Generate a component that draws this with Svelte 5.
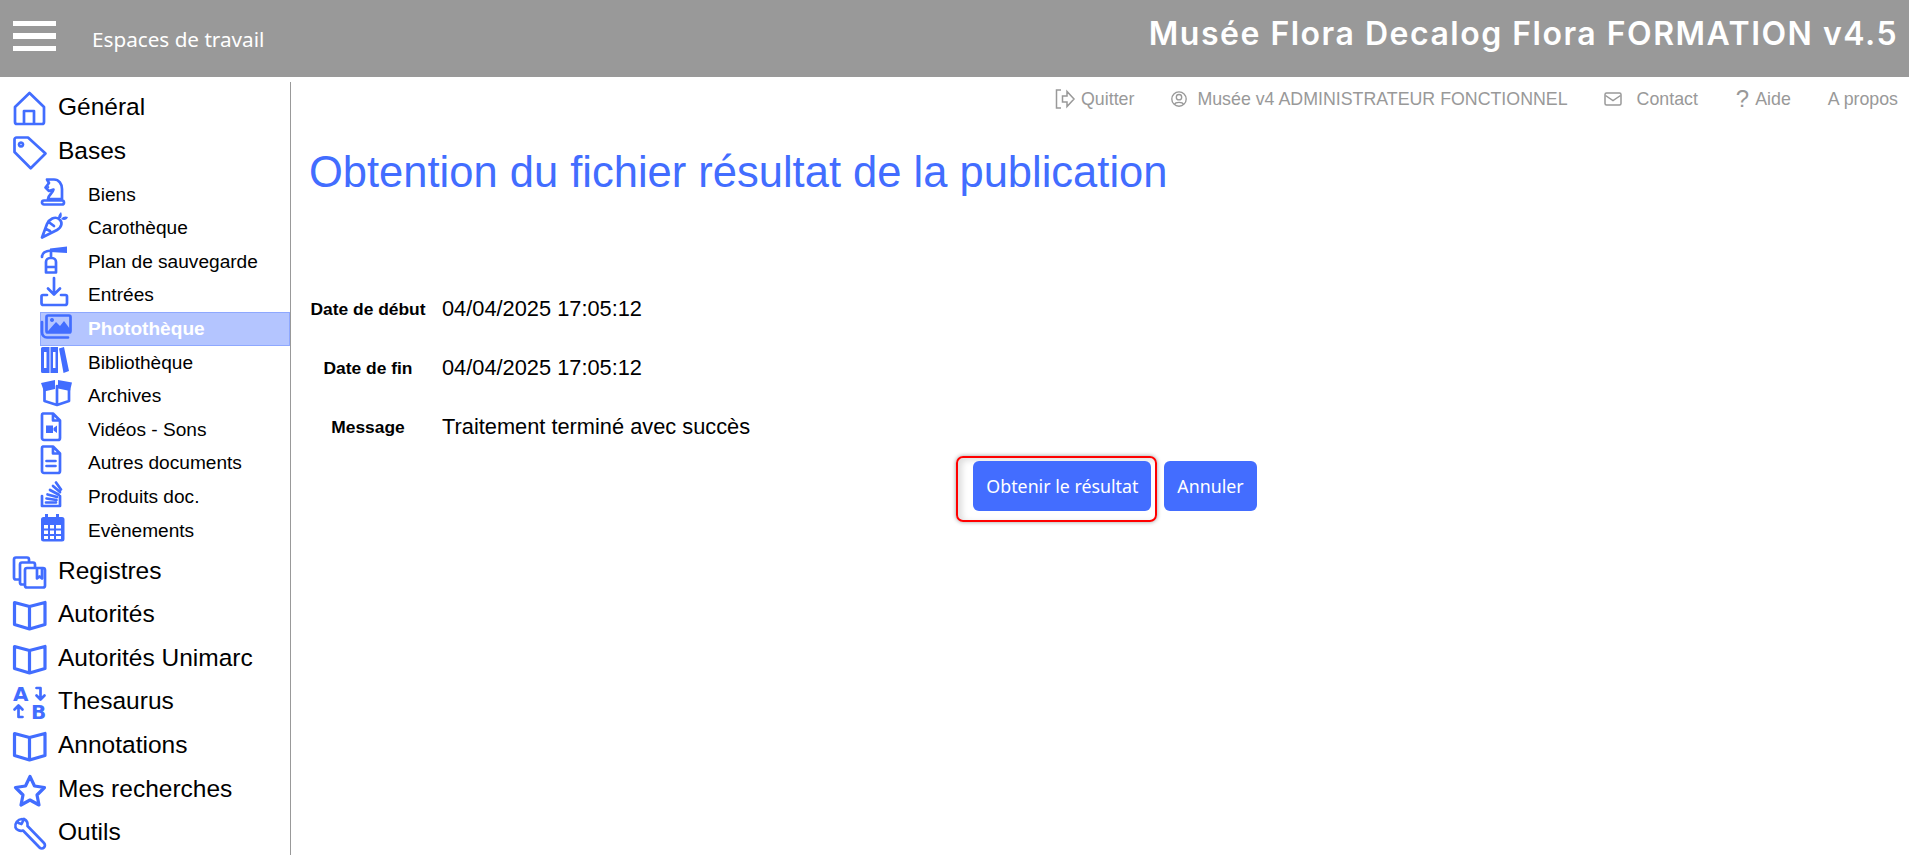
<script>
	// s = stroked outlines, f = filled shapes, all in a 34x34 box
	const icons = {
		home: { s: 'M16.5 1.5L2 15.5V30.5a2 2 0 0 0 2 2H29a2 2 0 0 0 2-2V15.5ZM11 32V19.5H21V32' },
		tag: { s: 'M3.5 2H15L32.5 18L17.7 32.8L1.5 16.5V4a2 2 0 0 1 2-2ZM8 7a2 2 0 1 0 .01 0Z' },
		biens: {
			s: 'M7 4.5H14C19 4.5 22 9 22 14V24H8C8 20 12.5 19 13.5 14.5L9 16L5.5 12.5L9 8ZM4 25.5H22a1.5 1.5 0 0 1 0 4H4a1.5 1.5 0 0 1 0-4Z',
			f: 'M8.2 11a1.1 1.1 0 1 0 .01 0Z'
		},
		carotte: {
			s: 'M2 29.5L7 16C9 11 15 8 19 11C23 14 22 19 17 22ZM6 21L10 23M10 15L14 18',
			f: 'M18 10C18 7 20 5 21 4C22 6 22 8 21 10ZM21 11C23 8 26 8 28 9C27 12 24 13 21 11Z'
		},
		extincteur: {
			s: 'M6 30.5V20a4 4 0 0 1 4-4h2a4 4 0 0 1 4 4V30.5ZM6 25H16M11 16V9M2 15C2 11 5 9 11 8.5',
			f: 'M10 6.5L27 4.5V11L10 10Z'
		},
		entrees: {
			s: 'M14 3V19M8 13.5L14 19.5L20 13.5M7 20H3a1.5 1.5 0 0 0-1.5 1.5V28a2 2 0 0 0 2 2H25a2 2 0 0 0 2-2V21.5A1.5 1.5 0 0 0 25.5 20H21'
		},
		photo: {
			s: 'M2 13V23C2 26 4 28.5 7 28.5H28M8 6.5H29a1.5 1.5 0 0 1 1.5 1.5V22a1.5 1.5 0 0 1-1.5 1.5H8a1.5 1.5 0 0 1-1.5-1.5V8A1.5 1.5 0 0 1 8 6.5Z',
			f: 'M8 22L16 13L20 17L24 12L30 20V23H8ZM12 9a2 2 0 1 0 .01 0Z'
		},
		biblio: {
			f: 'M2.500 4H9.500V30H2.500a1.500 1.500 0 0 1-1.500-1.500V5.500A1.500 1.500 0 0 1 2.500 4ZM10.500 4H18V30H10.500ZM19 5.500L24 4L29 28L23.500 30ZM4 9V25H6.500V9ZM13 9V25H15.500V9Z'
		},
		archives: {
			s: 'M4.500 13V25L17 29L29 25V13M17 10V29',
			f: 'M1 7L15 4V13L4 15.5ZM18 4L32 6.500L30 15L18 12.500Z'
		},
		video: {
			s: 'M3 3.500H13L20 10.500V28a2 2 0 0 1-2 2H4a2 2 0 0 1-2-2V5A1.500 1.500 0 0 1 3 3.500ZM13 4V10.500H20',
			f: 'M6 15.500H13V23H6ZM13.500 18L17 15.500V23L13.500 20.500Z'
		},
		doc: {
			s: 'M3 3.500H13L20 10.500V28a2 2 0 0 1-2 2H4a2 2 0 0 1-2-2V5A1.500 1.500 0 0 1 3 3.500ZM13 4V10.500H20M6.500 18H15.500M6.500 23H15.500'
		},
		produits: {
			s: 'M2 19V29H20V19M6 25.500H16M6.500 21.500L16.500 23M7.500 17.500L17 20M10 13L18.500 17.500M13 9L20 15M16 5.500L21 12.500'
		},
		evenements: {
			f: 'M5 3h3v3h8V3h3v3h3a2.500 2.500 0 0 1 2.500 2.500V28a2.500 2.500 0 0 1-2.500 2.500H3.500A2.500 2.500 0 0 1 1 28V8.500A2.500 2.500 0 0 1 3.500 6H5ZM4 14v3.500h4V14ZM10 14v3.500h4V14ZM16 14v3.500h5V14ZM4 19.500V23h4V19.500ZM10 19.500V23h4V19.500ZM16 19.500V23h5V19.500ZM4 25v3h4V25ZM10 25v3h4V25ZM16 25v3h5V25Z'
		},
		registres: {
			s: 'M6 24H3a2 2 0 0 1-2-2V4a2 2 0 0 1 2-2H14a2 2 0 0 1 2 2V6M11.500 29H9a2 2 0 0 1-2-2V9a2 2 0 0 1 2-2H20a2 2 0 0 1 2 2V12M14 12.500H30a2 2 0 0 1 2 2V30a2 2 0 0 1-2 2H14a2 2 0 0 1-2-2V14.500a2 2 0 0 1 2-2ZM24 13V23L26.500 21L29 23V13'
		},
		livre: { s: 'M1.500 4L16.500 8L32 4V26L16.500 30.500L1.500 26ZM16.500 8V30.500', heavy: true },
		etoile: { s: 'M17 3L21.500 12.500L31.500 14L24 21.500L26 31.500L17 26.500L8 31.500L10 21.500L2.500 14L12.500 12.500Z', heavy: true },
		outils: {
			s: 'M9 2.500A7 7 0 0 0 2.500 11C3.500 13.500 7 15 10 14L26.500 31A3 3 0 0 0 31 26.500L14.500 9.500C15 6.500 14 4 11 2.500L8.500 7.500L5.500 6.500'
		},
		thesaurus: { s: 'M23.500 2.500H27.500V13.500M23.500 10L27.500 14L31.500 10M9.500 31.500H5.500V20.500M1.500 24L5.500 20L9.500 24' }
	};

	const before = [
		{ label: 'Général', icon: 'home' },
		{ label: 'Bases', icon: 'tag' }
	];
	const subs = [
		{ label: 'Biens', icon: 'biens' },
		{ label: 'Carothèque', icon: 'carotte' },
		{ label: 'Plan de sauvegarde', icon: 'extincteur' },
		{ label: 'Entrées', icon: 'entrees' },
		{ label: 'Photothèque', icon: 'photo', active: true },
		{ label: 'Bibliothèque', icon: 'biblio' },
		{ label: 'Archives', icon: 'archives' },
		{ label: 'Vidéos - Sons', icon: 'video' },
		{ label: 'Autres documents', icon: 'doc' },
		{ label: 'Produits doc.', icon: 'produits' },
		{ label: 'Evènements', icon: 'evenements' }
	];
	const after = [
		{ label: 'Registres', icon: 'registres' },
		{ label: 'Autorités', icon: 'livre' },
		{ label: 'Autorités Unimarc', icon: 'livre' },
		{ label: 'Thesaurus', icon: 'thesaurus' },
		{ label: 'Annotations', icon: 'livre' },
		{ label: 'Mes recherches', icon: 'etoile' },
		{ label: 'Outils', icon: 'outils' }
	];
	const fields = [
		{ label: 'Date de début', value: '04/04/2025 17:05:12' },
		{ label: 'Date de fin', value: '04/04/2025 17:05:12' },
		{ label: 'Message', value: 'Traitement terminé avec succès' }
	];
</script>

{#snippet icon(name)}
	<svg class="icon" viewBox="0 0 34 34" width="34" height="34" aria-hidden="true">
		{#if icons[name].s}
			<path class="line" class:heavy={icons[name].heavy} d={icons[name].s} />
		{/if}
		{#if icons[name].f}
			<path class="fill" d={icons[name].f} />
		{/if}
		{#if name === 'thesaurus'}
			<text class="letter" x="0" y="15">A</text>
			<text class="letter" x="18" y="33">B</text>
		{/if}
	</svg>
{/snippet}

<div class="page">
	<header class="topbar">
		<div class="burger"><span></span><span></span><span></span></div>
		<span class="spaces">Espaces de travail</span>
		<span class="app-title">Musée Flora Decalog Flora FORMATION v4.5</span>
	</header>

	<div class="body">
		<nav class="sidebar">
			{#each before as item}
				<div class="nav-item">{@render icon(item.icon)}<span>{item.label}</span></div>
			{/each}
			<div class="sub-list">
				{#each subs as item}
					<div class="sub-item" class:active={item.active}>
						{@render icon(item.icon)}<span>{item.label}</span>
					</div>
				{/each}
			</div>
			{#each after as item}
				<div class="nav-item">{@render icon(item.icon)}<span>{item.label}</span></div>
			{/each}
		</nav>

		<main class="content">
			<div class="links">
				<span class="link quit">
					<svg viewBox="0 0 22 24" width="22" height="24" aria-hidden="true">
						<path d="M7 3H2.500V21H7M8.500 9H13V4.500L20 12L13 19.500V15H8.500Z" />
					</svg>
					Quitter
				</span>
				<span class="link user">
					<svg viewBox="0 0 20 20" width="18" height="18" aria-hidden="true">
						<circle cx="10" cy="10" r="8" />
						<circle cx="10" cy="8" r="3" />
						<path d="M5 16C6 13 14 13 15 16" />
					</svg>
					Musée v4 ADMINISTRATEUR FONCTIONNEL
				</span>
				<span class="link contact">
					<svg viewBox="0 0 20 16" width="20" height="16" aria-hidden="true">
						<rect x="2" y="2" width="16" height="12" rx="1.500" />
						<path d="M2.500 4.500L10 9.500L17.500 4.500" />
					</svg>
					Contact
				</span>
				<span class="link help"><span class="mark">?</span>Aide</span>
				<span class="link">A propos</span>
			</div>

			<h1>Obtention du fichier résultat de la publication</h1>

			<div class="fields">
				{#each fields as field}
					<div class="field">
						<span class="field-label">{field.label}</span>
						<span class="field-value">{field.value}</span>
					</div>
				{/each}
			</div>

			<div class="actions">
				<div class="highlight"><button type="button">Obtenir le résultat</button></div>
				<button type="button">Annuler</button>
			</div>
		</main>
	</div>
</div>

<style>
	:global(body) {
		margin: 0;
		background: #fff;
		font-family: 'Liberation Sans', Arial, sans-serif;
	}

	.page {
		height: 100vh;
		overflow: hidden;
		display: flex;
		flex-direction: column;
	}

	.topbar {
		flex: none;
		height: 77px;
		background: #999;
		color: #fff;
		display: flex;
		align-items: center;
		padding: 0 11px 0 13px;
		box-sizing: border-box;
	}

	.burger {
		display: flex;
		flex-direction: column;
		gap: 7px;
		width: 43px;
		margin-bottom: 5px;
	}

	.burger span {
		height: 5.500px;
		background: #fff;
	}

	.spaces {
		margin-left: 36px;
		font-family: 'Noto Sans', sans-serif;
		font-size: 20.700px;
	}

	.app-title {
		margin-left: auto;
		margin-bottom: 11px;
		font-family: Inter, sans-serif;
		font-size: 32px;
		font-weight: 600;
		letter-spacing: 1.500px;
	}

	.body {
		flex: 1;
		display: flex;
		min-height: 0;
	}

	.sidebar {
		flex: none;
		width: 291px;
		box-sizing: border-box;
		margin-top: 5px;
		padding-top: 3.700px;
		border-right: 1.500px solid #999;
	}

	.nav-item {
		height: 43.600px;
		display: flex;
		align-items: center;
		gap: 11px;
		padding-left: 13px;
		font-size: 24.500px;
		color: #000;
	}

	.sub-list {
		margin: 5px 0 1.400px 40px;
	}

	.sub-item {
		height: 33.600px;
		display: flex;
		align-items: center;
		gap: 14px;
		font-size: 19.100px;
		box-sizing: border-box;
	}

	.sub-item .icon {
		transform: translateY(-3px);
	}

	.nav-item .icon {
		transform: translateY(1.500px);
	}

	.sub-item.active {
		background: #b4c5ff;
		outline: 1px solid #8ea8ff;
		outline-offset: -1px;
		color: #fff;
		font-weight: 700;
	}

	.icon {
		flex: none;
		overflow: visible;
	}

	.line {
		fill: none;
		stroke: #426dff;
		stroke-width: 2.700;
		stroke-linejoin: round;
		stroke-linecap: round;
	}

	.line.heavy {
		stroke-width: 3.200;
	}

	.fill {
		fill: #426dff;
		fill-rule: evenodd;
	}

	.letter {
		fill: #426dff;
		font-family: 'DejaVu Sans', sans-serif;
		font-weight: 700;
		font-size: 20px;
	}

	.content {
		flex: 1;
		min-width: 0;
		padding: 0 11px 0 18px;
	}

	.links {
		display: flex;
		justify-content: flex-end;
		align-items: center;
		height: 34px;
		margin-top: 5px;
		color: #999;
		font-size: 17.800px;
	}

	.link {
		display: inline-flex;
		align-items: center;
		margin-left: 37px;
	}

	.link.user {
		margin-left: 36px;
	}

	.link.contact {
		margin-left: 35px;
	}

	.link.help {
		margin-left: 38px;
	}

	.link svg {
		fill: none;
		stroke: #999;
		stroke-width: 1.500;
		margin-right: 9px;
	}

	.quit svg {
		margin-right: 5px;
	}

	.contact svg {
		margin-right: 14px;
	}

	.mark {
		font-size: 24px;
		margin-right: 6px;
	}

	h1 {
		margin: 28px 0 0;
		font-size: 43.500px;
		font-weight: 400;
		line-height: 56px;
		color: #426dff;
	}

	.fields {
		margin-top: 79.500px;
	}

	.field {
		height: 59px;
		display: flex;
		align-items: center;
		color: #000;
	}

	.field-label {
		width: 118px;
		text-align: center;
		font-size: 17.400px;
		font-weight: 700;
	}

	.field-value {
		margin-left: 15px;
		font-size: 21.800px;
	}

	.actions {
		display: flex;
		justify-content: center;
		align-items: flex-start;
		gap: 7px;
		margin-top: 4px;
		padding-left: 6px;
	}

	.highlight {
		padding: 3px 4px 9px 15px;
		border: 2px solid #f00;
		border-radius: 7px;
		box-shadow: 0 0 4px #999, inset 4px 2px 6px #ddd;
		margin-top: -5px;
	}

	button {
		display: block;
		height: 50px;
		padding: 0 13px;
		border: none;
		border-radius: 6px;
		background: #436dff;
		color: #fff;
		font-family: 'Noto Sans', sans-serif;
		font-size: 17.800px;
	}
</style>
